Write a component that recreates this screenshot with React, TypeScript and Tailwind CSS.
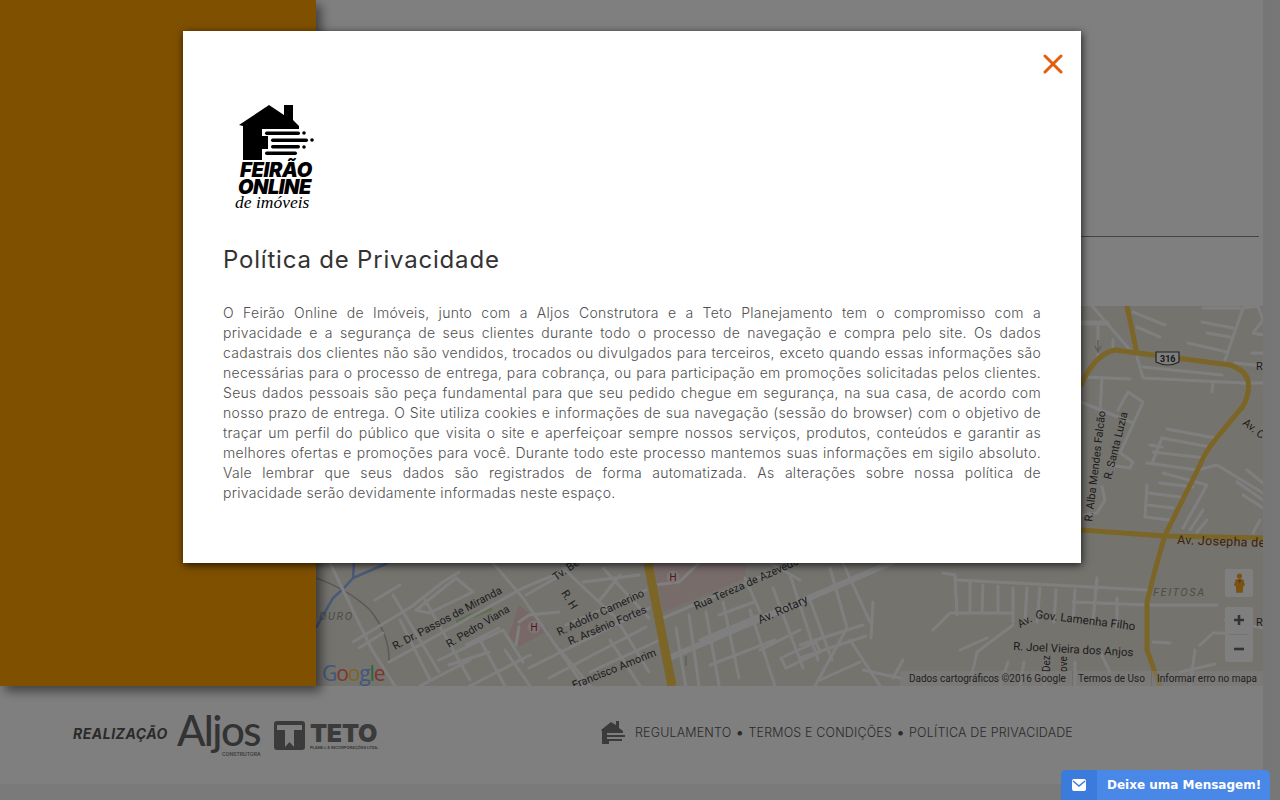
const streets = [
  // upper right part of the map
  "1092,306 1130,350", "1098,327 1098,357", "1113,340 1113,350", "1137,357 1143,378 1243,383 1263,383",
  "1143,367 1222,375", "1133,312 1165,325", "1137,327 1160,337", "1188,343 1227,352", "1202,322 1233,328",
  "1207,333 1230,337", "1243,308 1225,360", "1203,308 1240,308", "1243,308 1258,306 1263,320 1253,333 1263,335",
  "1252,353 1263,353", "1235,363 1263,366", "1213,383 1212,392", "1085,377 1130,379", "1102,377 1100,412",
  "1081,402 1133,423", "1128,392 1143,402 1120,453 1133,462 1130,468 1110,465", "1128,392 1118,410",
  "1167,429 1215,438", "1162,438 1210,447", "1162,438 1152,463", "1150,445 1162,447", "1153,452 1205,458",
  "1147,463 1197,470 1217,465 1263,493", "1163,473 1207,485 1183,528", "1160,483 1193,487", "1147,485 1145,517",
  "1148,493 1180,497", "1147,505 1173,508", "1145,517 1170,520", "1203,510 1190,530", "1207,520 1197,532",
  "1237,482 1263,500", "1243,495 1263,508", "1247,470 1263,483", "1260,520 1253,533",
  "1102,487 1105,500 1097,513 1083,515",
  // lower left part
  "330,563 372,650 395,686", "353,642 411,607 443,582 459,572", "359,648 383,633", "393,595 439,672",
  "416,610 456,578 473,592 429,613 416,610", "493,563 523,598 583,685", "439,660 503,630 523,662",
  "449,665 489,652", "466,645 499,628", "389,662 523,588 559,573 574,563", "526,595 556,578", "519,622 529,615 559,612",
  "516,645 519,627", "529,668 649,608", "566,625 646,590", "549,678 646,627", "583,582 639,575", "563,568 616,618 649,672",
  "603,568 649,618", "470,686 530,655", "420,686 470,660", "590,672 660,640", "610,640 640,686", "560,650 590,686",
  "400,620 430,680", "425,600 470,680", "480,640 505,686", "505,650 530,686", "375,600 400,585", "600,600 620,575",
  // lower middle part
  "663,618 800,560", "676,628 686,688", "689,615 699,686", "706,612 719,685", "723,602 739,678", "773,588 803,668",
  "719,615 754,602", "781,658 816,642", "786,668 820,652", "781,658 786,668", "816,642 820,652", "654,585 679,582 699,563",
  "750,610 775,686", "760,650 800,630", "800,645 863,625", "800,658 866,636", "830,568 847,628 815,686",
  "843,563 870,622", "873,602 871,638", "810,600 832,660", "790,575 818,660", "770,563 800,580", "745,578 760,612",
  "820,680 860,662", "850,640 880,686", "700,640 760,615", "710,665 775,640",
  // lower right part
  "943,573 955,575 957,615", "957,580 1147,590", "970,582 970,612", "983,585 982,612", "998,586 998,612", "1013,588 1013,622",
  "1027,588 1025,622", "1040,588 1037,622", "1056,590 1054,622", "1075,590 1073,622", "1097,578 1093,622", "1117,598 1117,628",
  "1073,602 1147,605", "1150,605 1217,605",
  "933,630 950,613 1013,613", "970,682 977,652 1013,625", "960,650 987,638", "1153,642 1170,643",
  "1200,645 1213,633 1225,633", "863,670 900,678", "893,678 903,660", "1100,652 1110,672", "1000,686 1008,662",
  "1020,686 1024,662", "1045,686 1045,660", "1075,686 1075,662", "1180,672 1215,664", "1190,686 1195,650", "1225,620 1263,628",
];

const mapLabels = [
  { text: "R. Dr. Passos de Miranda", x: 395, y: 650, angle: -28, size: 11 },
  { text: "R. Pedro Viana", x: 449, y: 648, angle: -31, size: 11 },
  { text: "Tv. Be", x: 556, y: 581, angle: -35, size: 11 },
  { text: "R. H", x: 561, y: 593, angle: 58, size: 11 },
  { text: "R. Adolfo Camerino", x: 559, y: 636, angle: -25, size: 11 },
  { text: "R. Arsênio Fortes", x: 570, y: 645, angle: -23, size: 11 },
  { text: "Rua Tereza de Azevedo", x: 696, y: 610, angle: -24, size: 11 },
  { text: "Av. Rotary", x: 760, y: 624, angle: -24, size: 12 },
  { text: "Francisco Amorim", x: 574, y: 689, angle: -22, size: 11 },
  { text: "Av.", x: 1020, y: 628, angle: -28, size: 11 },
  { text: "Gov. Lamenha Filho", x: 1035, y: 618, angle: 7, size: 11.5 },
  { text: "R. Joel Vieira dos Anjos", x: 1013, y: 650, angle: 3, size: 11.5 },
  { text: "Dez", x: 1050, y: 672, angle: -90, size: 10 },
  { text: "ove", x: 1067, y: 672, angle: -90, size: 10 },
  { text: "R.", x: 1256, y: 626, angle: 0, size: 11 },
  { text: "R. Alba Mendes Falcão", x: 1092, y: 522, angle: -83, size: 11 },
  { text: "R. Santa Luzia", x: 1111, y: 480, angle: -76, size: 11 },
  { text: "Av. C", x: 1242, y: 424, angle: 38, size: 11 },
  { text: "R.", x: 1256, y: 370, angle: 0, size: 11 },
];

const policyLines = [
  "O Feirão Online de Imóveis, junto com a Aljos Construtora e a Teto Planejamento tem o compromisso com a",
  "privacidade e a segurança de seus clientes durante todo o processo de navegação e compra pelo site. Os dados",
  "cadastrais dos clientes não são vendidos, trocados ou divulgados para terceiros, exceto quando essas informações são",
  "necessárias para o processo de entrega, para cobrança, ou para participação em promoções solicitadas pelos clientes.",
  "Seus dados pessoais são peça fundamental para que seu pedido chegue em segurança, na sua casa, de acordo com",
  "nosso prazo de entrega. O Site utiliza cookies e informações de sua navegação (sessão do browser) com o objetivo de",
  "traçar um perfil do público que visita o site e aperfeiçoar sempre nossos serviços, produtos, conteúdos e garantir as",
  "melhores ofertas e promoções para você. Durante todo este processo mantemos suas informações em sigilo absoluto.",
  "Vale lembrar que seus dados são registrados de forma automatizada. As alterações sobre nossa política de",
];

function MapDrawing() {
  return (
    <svg viewBox="316 306 947 380" className="block w-full h-full">
      <rect x="316" y="306" width="947" height="380" fill="#e9e6dc" />
      <polygon points="653,563 746,563 746,578 663,612" fill="#f0d8d4" />
      <polygon points="519,605 549,630 518,647 509,635" fill="#f0d0cc" />
      <polygon points="456,625 493,610 490,605 456,620" fill="#c4dc9c" />
      <path d="M354 563 L353 578 L388 563 M344 588 L353 578 M316 628 L333 598 L344 588" fill="none" stroke="#90b4f4" strokeWidth="2.5" />
      <path d="M316 578 Q349 590 370 610 Q390 635 389 662" fill="none" stroke="#b8b4ac" strokeWidth="1.5" />
      <g fill="none" stroke="#ffffff" strokeWidth="3" strokeLinejoin="round" strokeLinecap="round">
        {streets.map((pts) => (
          <polyline key={pts} points={pts} />
        ))}
        <path d="M1081 323 H1107" strokeWidth="5" />
        <path d="M669 658 L809 598 L893 562" strokeWidth="6" />
      </g>
      <path d="M1098 340 V352 M1095 346 L1098 352 L1101 346 M686 666 V656" fill="none" stroke="#c0bcb4" strokeWidth="1.5" />
      <g fill="none" stroke="#f6cc4e" strokeWidth="5" strokeLinejoin="round" strokeLinecap="round">
        <path d="M1127 306 L1136 349" />
        <path d="M1081 385 Q1095 354 1115 350 L1230 365 Q1252 372 1248 392 Q1246 405 1238 412 L1215 440 Q1205 452 1200 465 L1180 505 L1165 535 L1155 570 L1147 602 V650 L1160 686" />
        <path d="M1081 530 L1165 536 L1263 538" />
        <path d="M648 563 L672 686" strokeWidth="9" strokeLinecap="butt" />
      </g>
      <path d="M1156 352 H1179 V362 Q1168 368 1156 362 Z" fill="#fff" stroke="#444" strokeWidth="1.2" />
      <text x="1160" y="362" fontSize="9" fontWeight="700" fill="#333" className="font-['Roboto',sans-serif]">316</text>
      <circle cx="534" cy="627" r="6.5" fill="#f4f0ec" />
      <circle cx="673" cy="577" r="6.5" fill="#f4f0ec" />
      <text x="530.5" y="631" fontSize="10" fill="#c8202c" className="font-['Roboto',sans-serif]">H</text>
      <text x="669.5" y="581" fontSize="10" fill="#c8202c" className="font-['Roboto',sans-serif]">H</text>
      <g fill="#3c3c3c" className="font-['Roboto',sans-serif]">
        {mapLabels.map((l) => (
          <text key={l.text + l.x} x={l.x} y={l.y} fontSize={l.size} transform={`rotate(${l.angle} ${l.x} ${l.y})`}>
            {l.text}
          </text>
        ))}
      </g>
      <text x="1177" y="544" fontSize="12.5" fill="#7a4412" letterSpacing=".3" transform="rotate(2 1177 544)" className="font-['Roboto',sans-serif]">Av. Josepha de</text>
      <text x="1153" y="596" fontSize="11" fontStyle="italic" fill="#9a9a94" letterSpacing="1.6" className="font-['Roboto',sans-serif]">FEITOSA</text>
      <text x="319" y="620" fontSize="11" fontStyle="italic" fill="#9a9a94" letterSpacing="1.6" className="font-['Roboto',sans-serif]">OURO</text>
    </svg>
  );
}

function HouseLogo() {
  return (
    <div className="relative w-[82px] h-[104px]">
      <svg viewBox="0 0 82 60" className="w-[82px] h-[60px] block">
        <path d="M4 20 L34 0 L49 10 V0 H58 V15 L64 21 V24 H27 V31 H33 V44 H27 V55 H8 V21 Z" fill="#000" />
        <rect x="30" y="26.5" width="35" height="3.4" rx="1.7" fill="#000" />
        <rect x="36" y="33.5" width="37" height="3.4" rx="1.7" fill="#000" />
        <rect x="36" y="40" width="29" height="3.4" rx="1.7" fill="#000" />
        <rect x="30" y="46.5" width="32" height="3.4" rx="1.7" fill="#000" />
        <circle cx="69" cy="28" r="1.8" fill="#000" />
        <circle cx="77" cy="35" r="1.8" fill="#000" />
        <circle cx="69" cy="42" r="1.8" fill="#000" />
      </svg>
      <div className="absolute left-[5px] top-[55px] text-[20px] leading-[20px] font-black italic text-black font-['Inter',sans-serif] tracking-[-0.3px]">FEIRÃO</div>
      <div className="absolute left-[3px] top-[72px] text-[20px] leading-[20px] font-black italic text-black font-['Inter',sans-serif] tracking-[-0.5px]">ONLINE</div>
      <div className="absolute left-0 top-[89px] text-[17.5px] leading-[17px] italic text-black font-['Liberation_Serif',serif] whitespace-nowrap">de imóveis</div>
    </div>
  );
}

export default function App() {
  return (
    <div className="relative w-[1280px] h-[800px] overflow-hidden bg-white flex font-['Inter',sans-serif]">
      <div className="w-[1263px] flex flex-col">
        <div className="flex h-[686px]">
          {/* Sidebar */}
          <aside className="relative z-10 w-[316px] bg-[#ffa000] shadow-[5px_5px_10px_rgba(0,0,0,0.5)]" />

          {/* Content */}
          <main className="flex-1 flex flex-col">
            <div className="h-[237px] mr-[4px] border-b border-[#888]" />
            <div className="h-[69px]" />
            <div className="relative h-[380px]">
              <MapDrawing />
              <div className="absolute left-[6px] bottom-[1px] text-[21px] leading-[24px] font-medium font-['Open_Sans',sans-serif] tracking-[-1.1px]">
                <span className="text-[#7fb0ff]">G</span>
                <span className="text-[#ff6a5a]">o</span>
                <span className="text-[#ffcc40]">o</span>
                <span className="text-[#7fb0ff]">g</span>
                <span className="text-[#56c968]">l</span>
                <span className="text-[#ff6a5a]">e</span>
              </div>
              <div className="absolute right-0 bottom-0 h-[15px] pl-[9px] pr-[6px] flex items-center gap-[6px] bg-white/50 text-[10px] text-[#444] font-['Roboto',sans-serif]">
                <span>Dados cartográficos ©2016 Google</span>
                <span className="border-l border-[#ddd] pl-[5px]">Termos de Uso</span>
                <span className="border-l border-[#ddd] pl-[5px]">Informar erro no mapa</span>
              </div>
              <div className="absolute left-[909px] top-[263px] w-[28px] h-[28px] rounded-[2px] bg-white flex items-center justify-center">
                <svg viewBox="0 0 14 22" className="w-[13px] h-[21px]">
                  <circle cx="7" cy="3" r="2.8" fill="#f5a623" />
                  <path d="M3 6.5 H11 L13 13 L11 14 L10.5 21 H3.5 L3 14 L1 13 Z" fill="#f5a623" />
                  <path d="M5 7 L7 11 L9 7 Z" fill="#e2603c" />
                </svg>
              </div>
              <div className="absolute left-[909px] top-[301px] w-[28px] h-[55px] rounded-[2px] bg-white flex flex-col items-center">
                <svg viewBox="0 0 12 12" className="w-[12px] h-[12px] mt-[7px]">
                  <path d="M6 1 V11 M1 6 H11" stroke="#666" strokeWidth="2.6" />
                </svg>
                <div className="w-[20px] h-px bg-[#e6e6e6] mt-[8px]" />
                <svg viewBox="0 0 12 12" className="w-[12px] h-[12px] mt-[8px]">
                  <path d="M1 6 H11" stroke="#666" strokeWidth="2.6" />
                </svg>
              </div>
            </div>
          </main>
        </div>

        {/* Footer */}
        <footer className="h-[98px] flex items-center pl-[73px]">
          <div className="w-[527px] flex items-center -mt-[4px]">
            <span className="text-[14px] font-bold italic text-[#555] tracking-[0.5px]">REALIZAÇÃO</span>
            <div className="relative ml-[9px] w-[82px] h-[44px]">
              <span className="absolute left-0 -top-[1px] text-[42px] leading-[40px] font-medium text-[#666] font-['Lato',sans-serif] tracking-[-1.6px]">Aljos</span>
              <span className="absolute left-[45px] top-[40px] text-[5px] leading-[6px] text-[#777] font-semibold">CONSTRUTORA</span>
            </div>
            <div className="ml-[15px] mt-[4px] flex items-center gap-[5px]">
              <svg viewBox="0 0 31 29" className="w-[31px] h-[29px]">
                <path fillRule="evenodd" fill="#777" d="M3 0 H28 Q31 0 31 3 V26 Q31 29 28 29 H3 Q0 29 0 26 V3 Q0 0 3 0 Z M3 4 V9 H11 V26 L15.5 21 L20 26 V9 H28 V4 Z" />
              </svg>
              <div className="flex flex-col">
                <span className="text-[25px] leading-[24px] font-black text-[#777] tracking-[-0.2px]">TETO</span>
                <span className="text-[4px] leading-[5px] font-bold text-[#777]">PLANEJ. E INCORPORAÇÕES LTDA.</span>
              </div>
            </div>
          </div>
          <div className="flex items-center -mt-[4px]">
            <svg viewBox="0 0 26 24" className="w-[26px] h-[24px]">
              <path d="M1 9 L11 1 L16 4 V0 H19 V7 L23 10 V12 H7 V14 H25 V16 H7 V18 H22 V20 H9 V23 H2 V10 Z" fill="#777" />
            </svg>
            <span className="ml-[9px] text-[12.5px] font-light text-[#555] whitespace-nowrap tracking-[0.16px]">
              REGULAMENTO <span className="text-[17px] leading-none align-[-1px]">•</span> TERMOS E CONDIÇÕES <span className="text-[17px] leading-none align-[-1px]">•</span> POLÍTICA DE PRIVACIDADE
            </span>
          </div>
        </footer>
        <div className="h-[16px] bg-[#f5f5f5]" />
      </div>
      <div className="w-[17px] bg-[#ededed]" />

      {/* Modal */}
      <div className="absolute inset-0 z-20 bg-black/50">
        <div className="ml-[183px] mt-[31px] w-[898px] h-[532px] bg-white shadow-[1px_2px_8px_rgba(0,0,0,0.75)] relative px-[40px] pt-[74px]">
          <button className="absolute right-[16px] top-[22px] w-[24px] h-[22px] flex items-center justify-center">
            <svg viewBox="0 0 20 20" className="w-[20px] h-[20px]">
              <path d="M2 2 L18 18 M18 2 L2 18" stroke="#e35d0a" strokeWidth="3" strokeLinecap="round" />
            </svg>
          </button>
          <div className="pl-[12px]">
            <HouseLogo />
          </div>
          <h2 className="mt-[35px] text-[24px] leading-[32px] text-[#333] font-normal tracking-[0.8px]">Política de Privacidade</h2>
          <div className="mt-[27px] text-[14px] leading-[20px] font-light text-[#505050] w-[818px] tracking-[0.3px]">
            {policyLines.map((line) => (
              <p key={line} className="whitespace-nowrap [text-align:justify] [text-align-last:justify]">{line}</p>
            ))}
            <p>privacidade serão devidamente informadas neste espaço.</p>
          </div>
        </div>
      </div>

      {/* Chat tab */}
      <div className="absolute z-30 left-[1061px] bottom-0 w-[209px] h-[30px] rounded-t-[5px] overflow-hidden flex bg-[#4a88e8] text-white">
        <div className="w-[36px] bg-[#3b7bdc] flex items-center justify-center">
          <svg viewBox="0 0 14 12" className="w-[14px] h-[12px]">
            <rect width="14" height="12" rx="2" fill="#fff" />
            <path d="M1 2 L7 7 L13 2" fill="none" stroke="#3b7bdc" strokeWidth="1.5" />
          </svg>
        </div>
        <span className="ml-[10px] leading-[30px] text-[12px] font-bold font-['DejaVu_Sans',sans-serif] whitespace-nowrap">Deixe uma Mensagem!</span>
      </div>
    </div>
  );
}
